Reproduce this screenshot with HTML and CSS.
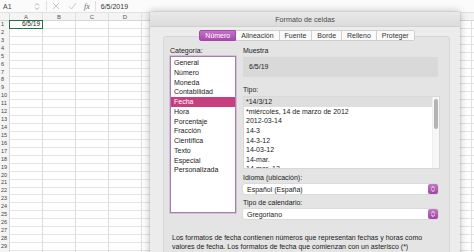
FILE: index.html
```html
<!DOCTYPE html>
<html lang="es">
<head>
<meta charset="utf-8">
<title>Formato de celdas</title>
<link rel="stylesheet" href="styles.css">
</head>
<body>
<div class="app">
  <div class="sheet">
    <div class="fbar">
      <span class="namebox">A1</span>
      <svg class="nb-arrow" width="6" height="9" viewBox="0 0 6 9"><path d="M1 3.5 L3 1.5 L5 3.5 M1 5.5 L3 7.5 L5 5.5" fill="none" stroke="#999" stroke-width="0.8"/></svg>
      <span class="fsep"></span>
      <svg class="ficon" width="8" height="8" viewBox="0 0 8 8"><path d="M1 1 L7 7 M7 1 L1 7" stroke="#bbb" stroke-width="0.8"/></svg>
      <svg class="ficon" width="9" height="8" viewBox="0 0 9 8"><path d="M1 4.5 L3.5 7 L8 1" fill="none" stroke="#bbb" stroke-width="0.8"/></svg>
      <span class="fx">fx</span>
      <span class="fsep"></span>
      <span class="fval">6/5/2019</span>
    </div>
    <div class="colhead">
      <span class="corner"></span>
      <span class="col">A</span><span class="col">B</span><span class="col">C</span><span class="col">D</span><span class="col"></span><span class="col"></span><span class="col"></span><span class="col"></span><span class="col"></span><span class="col"></span>
    </div>
    <div class="grid">
      <div class="rownums">
        <span>1</span><span>2</span><span>3</span><span>4</span><span>5</span><span>6</span><span>7</span><span>8</span><span>9</span><span>10</span>
        <span>11</span><span>12</span><span>13</span><span>14</span><span>15</span><span>16</span><span>17</span><span>18</span><span>19</span><span>20</span>
        <span>21</span><span>22</span><span>23</span><span>24</span><span>25</span><span>26</span><span>27</span><span>28</span><span>29</span>
      </div>
      <div class="cells">
        <div class="a1">6/5/19</div>
      </div>
    </div>
  </div>

  <div class="dialog">
    <div class="titlebar">Formato de celdas</div>
    <div class="dbody">
      <div class="tabs">
        <span class="tab active">Número</span>
        <span class="tab">Alineación</span>
        <span class="tab">Fuente</span>
        <span class="tab">Borde</span>
        <span class="tab">Relleno</span>
        <span class="tab">Proteger</span>
      </div>
      <div class="panel">
        <div class="cols">
          <div class="leftcol">
            <div class="label">Categoría:</div>
            <ul class="catlist">
              <li>General</li>
              <li>Número</li>
              <li>Moneda</li>
              <li>Contabilidad</li>
              <li class="sel">Fecha</li>
              <li>Hora</li>
              <li>Porcentaje</li>
              <li>Fracción</li>
              <li>Científica</li>
              <li>Texto</li>
              <li>Especial</li>
              <li>Personalizada</li>
            </ul>
          </div>
          <div class="rightcol">
            <div class="label">Muestra</div>
            <div class="sample">6/5/19</div>
            <div class="label tipo-label">Tipo:</div>
            <div class="tipolist">
              <ul class="tipoitems">
                <li class="sel">*14/3/12</li>
                <li>*miércoles, 14 de marzo de 2012</li>
                <li>2012-03-14</li>
                <li>14-3</li>
                <li>14-3-12</li>
                <li>14-03-12</li>
                <li>14-mar.</li>
                <li>14-mar.-12</li>
              </ul>
              <div class="scroll"><div class="thumb"></div></div>
            </div>
            <div class="label gap-label">Idioma (ubicación):</div>
            <div class="select">
              <span>Español (España)</span>
              <span class="stepper"><svg width="6" height="8" viewBox="0 0 6 8"><path d="M1.2 3.2 L3 1.5 L4.8 3.2 M1.2 4.8 L3 6.5 L4.8 4.8" fill="none" stroke="#fff" stroke-width="0.9"/></svg></span>
            </div>
            <div class="label gap-label">Tipo de calendario:</div>
            <div class="select">
              <span>Gregoriano</span>
              <span class="stepper"><svg width="6" height="8" viewBox="0 0 6 8"><path d="M1.2 3.2 L3 1.5 L4.8 3.2 M1.2 4.8 L3 6.5 L4.8 4.8" fill="none" stroke="#fff" stroke-width="0.9"/></svg></span>
            </div>
          </div>
        </div>
        <p class="desc">Los formatos de fecha contienen números que representan fechas y horas como valores de fecha. Los formatos de fecha que comienzan con un asterisco (*)</p>
      </div>
    </div>
  </div>
</div>
</body>
</html>
```

FILE: styles.css
```css
* { box-sizing: border-box; margin: 0; padding: 0; }
html, body { width: 474px; height: 252px; overflow: hidden; background: #fff; }
body { font-family: "Liberation Sans", Arial, sans-serif; color: #222; }

.app { position: relative; width: 474px; height: 252px; overflow: hidden; }

/* ---------- spreadsheet ---------- */
.sheet { width: 474px; height: 252px; display: flex; flex-direction: column; }
.fbar {
  height: 13px; display: flex; align-items: center; border-bottom: 1px solid #e2e2e2;
  font-size: 7px; color: #444; background: #fbfbfb;
}
.namebox { width: 34px; padding-left: 3px; }
.nb-arrow { margin-right: 6px; }
.fsep { width: 1px; height: 10px; background: #e0e0e0; }
.ficon { margin-left: 5px; margin-right: 3px; }
.fx { font-family: "Liberation Serif", serif; font-style: italic; font-size: 8px; color: #666; margin: 0 5px 0 4px; }
.fval { margin-left: 5px; color: #333; }

.colhead { height: 8px; display: flex; background: #f4f4f4; border-bottom: 1px solid #d6d6d6; font-size: 6px; color: #555; line-height: 8px; }
.corner { width: 10px; flex: none; border-right: 1px solid #d6d6d6; }
.col { width: 33px; flex: none; text-align: center; border-right: 1px solid #e0e0e0; }

.grid { flex: 1; display: flex; }
.rownums { width: 10px; flex: none; display: flex; flex-direction: column; background: #f4f4f4; border-right: 1px solid #d6d6d6; }
.rownums span { height: 7.93px; line-height: 7.93px; font-size: 5.5px; color: #444; padding-left: 1px; }
.cells {
  flex: 1;
  background-image:
    repeating-linear-gradient(to right, transparent 0 32px, #dedede 32px 33px),
    repeating-linear-gradient(to bottom, transparent 0 6.93px, #e4e4e4 6.93px 7.93px);
}
.a1 {
  width: 34px; height: 9px; margin-left: -1px; margin-top: -1px;
  border: 1.3px solid #217346; font-size: 6.5px; line-height: 6.5px; text-align: right; padding-right: 2px; color: #222;
}

/* ---------- dialog ---------- */
.dialog {
  position: absolute; left: 150px; top: 12px; width: 310px; height: 260px;
  background: #ececec; box-shadow: 0 0 8px rgba(0,0,0,0.28), 0 0 1px rgba(0,0,0,0.3);
  display: flex; flex-direction: column;
}
.titlebar {
  height: 15px; flex: none; text-align: center; font-size: 7.2px; line-height: 15px; color: #4a4a4a;
  background: linear-gradient(#e9e9e9, #dcdcdc); border-bottom: 1px solid #cfcfcf;
}
.dbody { flex: 1; display: flex; flex-direction: column; padding: 3px 10px 0 13px; }
.tabs { display: flex; justify-content: center; position: relative; z-index: 1; margin-bottom: -5px; padding-left: 1px; }
.tab {
  height: 11px; line-height: 10px; font-size: 7px; color: #333; padding: 0 5px;
  background: #fafafa; border: 1px solid #cfcfcf; border-left: none;
}
.tab:first-child { border-left: 1px solid #cfcfcf; border-radius: 2px 0 0 2px; }
.tab:last-child { border-radius: 0 2px 2px 0; }
.tab.active { background: linear-gradient(#c373c6, #a848ad); color: #fff; border-color: #a04aa6; }

.panel {
  flex: 1; background: #e4e4e4; border: 1px solid #d6d6d6; border-radius: 3px;
  padding: 9px 9px 0 6px;
}
.cols { display: flex; gap: 7px; }
.label { font-size: 7px; line-height: 9px; height: 9px; color: #222; }
.leftcol { width: 66px; flex: none; }
.catlist {
  list-style: none; margin-top: 1px; height: 157px; background: #fff;
  border: 1px solid #a57fae; box-shadow: 0 0 0 0.6px #c8a9cf; padding-top: 1px;
}
.catlist li { height: 9.75px; line-height: 9.75px; font-size: 7px; padding-left: 3px; color: #222; }
.catlist li.sel { background: #c83f7d; color: #fff; }

.rightcol { width: 197px; flex: none; display: flex; flex-direction: column; }
.sample { margin-top: 2px; height: 20px; width: 195px; background: #d9d9d9; font-size: 7px; line-height: 20px; padding-left: 6px; }
.tipo-label { margin-top: 8px; }
.tipolist { margin-top: 2px; height: 73px; background: #fff; display: flex; border: 1px solid #d8d8d8; overflow: hidden; }
.tipoitems { list-style: none; flex: 1; }
.tipoitems li { height: 9.65px; line-height: 9.65px; font-size: 7px; padding-left: 2px; color: #222; }
.tipoitems li.sel { background: #dedede; }
.scroll { width: 7px; flex: none; padding: 2px 1px; background: #f7f7f7; border-left: 1px solid #eee; }
.thumb { height: 30px; background: #b4b4b4; border-radius: 3px; }
.gap-label { margin-top: 4px; }
.select {
  margin-top: 2px; height: 10px; width: 195px; background: #fff; display: flex; align-items: center; justify-content: space-between;
  font-size: 7px; padding-left: 4px; border-radius: 2px; box-shadow: 0 0 0 0.5px #cfcfcf;
}
.stepper {
  width: 10px; height: 10px; border-radius: 2px; background: linear-gradient(#c379c6, #9c46a3);
  display: flex; align-items: center; justify-content: center;
}
.desc { margin-top: 14px; font-size: 7px; line-height: 9px; padding-left: 2px; width: 272px; color: #222; }
```
